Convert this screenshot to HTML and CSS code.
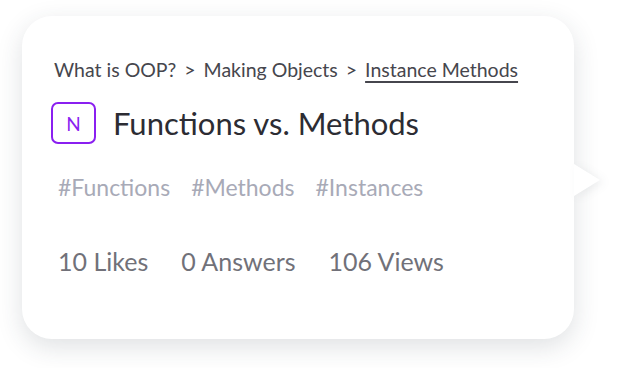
FILE: index.html
```html
<!DOCTYPE html>
<html lang="en">
<head>
  <meta charset="UTF-8">
  <title>Question card</title>
  <link rel="stylesheet" href="styles.css">
</head>
<body>
  <div class="card">
    <div class="crumbs">
      <span>What is OOP?</span>
      <span class="sep">&gt;</span>
      <span>Making Objects</span>
      <span class="sep">&gt;</span>
      <a href="#" class="current">Instance Methods</a>
    </div>

    <div class="title-row">
      <span class="badge">N</span>
      <h2>Functions vs. Methods</h2>
    </div>

    <div class="tags">
      <span>#Functions</span>
      <span>#Methods</span>
      <span>#Instances</span>
    </div>

    <div class="stats">
      <span>10 Likes</span>
      <span>0 Answers</span>
      <span>106 Views</span>
    </div>
  </div>
</body>
</html>
```

FILE: styles.css
```css
html, body {
  height: 100%;
}
body {
  margin: 0;
  background: #fff;
  font-family: Lato, "Noto Sans", Arial, sans-serif;
  padding: 16px 0 0 22px;
  box-sizing: border-box;
}
.card {
  position: relative;
  width: 552px;
  height: 323px;
  box-sizing: border-box;
  padding: 40px 0 0 32px;
  background: #fff;
  border-radius: 30px;
  box-shadow: 0 8px 26px rgba(40, 55, 70, 0.15);
}
.card::after {
  content: "";
  position: absolute;
  right: -26px;
  top: 148px;
  border-left: 26px solid #fff;
  border-top: 16px solid transparent;
  border-bottom: 16px solid transparent;
  filter: drop-shadow(4px 2px 4px rgba(40, 55, 70, 0.08));
}
.crumbs {
  font-size: 19.5px;
  line-height: 28px;
  color: #46464d;
  display: flex;
  gap: 8px;
}
.crumbs .current {
  color: #46464d;
  text-decoration: underline;
  text-decoration-thickness: 2px;
  text-underline-offset: 4px;
}
.title-row {
  display: flex;
  align-items: center;
  gap: 17px;
  margin-top: 18px;
  margin-left: -3px;
}
.badge {
  width: 41px;
  height: 38px;
  border: 2px solid #8a1ff0;
  border-radius: 7px;
  color: #8a1ff0;
  font-size: 19px;
  display: flex;
  align-items: center;
  justify-content: center;
}
h2 {
  margin: 0;
  font-size: 31px;
  line-height: 40px;
  font-weight: normal;
  color: #2c2c33;
}
.tags {
  display: flex;
  gap: 21px;
  margin-top: 28px;
  margin-left: 4px;
  font-size: 23px;
  line-height: 30px;
  color: #a8aab7;
}
.stats {
  display: flex;
  gap: 33px;
  margin-top: 43px;
  margin-left: 4px;
  font-size: 25px;
  line-height: 32px;
  color: #717179;
}
```
